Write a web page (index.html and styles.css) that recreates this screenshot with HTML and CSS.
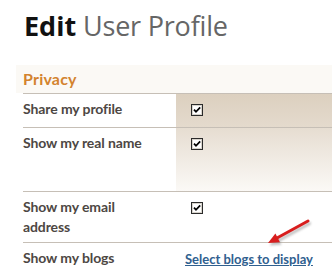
FILE: index.html
```html
<!DOCTYPE html>
<html>
<head>
<meta charset="utf-8">
<link rel="stylesheet" href="styles.css">
</head>
<body>
<div class="page">
  <h1 class="title"><span class="title-strong">Edit</span> User Profile</h1>
  <div class="section-band"><h2 class="section-title">Privacy</h2></div>
  <div class="rows">
    <div class="row row--share">
      <div class="label">Share my profile</div>
      <div class="value value--shade-a">
        <svg class="check" width="12" height="12" viewBox="0 0 12 12"><rect x="0.5" y="0.5" width="11" height="11" fill="#fff" stroke="#2b2b2b"/><rect x="1.5" y="1.5" width="9" height="9" fill="none" stroke="#d8d4cc"/><path d="M3 5.6 L5 7.8 L9.2 3.4" fill="none" stroke="#000" stroke-width="1.8"/></svg>
      </div>
    </div>
    <div class="row row--name">
      <div class="label">Show my real name</div>
      <div class="value value--shade-b">
        <svg class="check" width="12" height="12" viewBox="0 0 12 12"><rect x="0.5" y="0.5" width="11" height="11" fill="#fff" stroke="#2b2b2b"/><rect x="1.5" y="1.5" width="9" height="9" fill="none" stroke="#d8d4cc"/><path d="M3 5.6 L5 7.8 L9.2 3.4" fill="none" stroke="#000" stroke-width="1.8"/></svg>
      </div>
    </div>
    <div class="row row--email">
      <div class="label">Show my email<br>address</div>
      <div class="value">
        <svg class="check" width="12" height="12" viewBox="0 0 12 12"><rect x="0.5" y="0.5" width="11" height="11" fill="#fff" stroke="#2b2b2b"/><rect x="1.5" y="1.5" width="9" height="9" fill="none" stroke="#d8d4cc"/><path d="M3 5.6 L5 7.8 L9.2 3.4" fill="none" stroke="#000" stroke-width="1.8"/></svg>
      </div>
    </div>
    <div class="row row--blogs">
      <div class="label">Show my blogs</div>
      <div class="value value--link"><a class="link" href="#">Select blogs to display</a></div>
    </div>
  </div>
  <svg class="arrow" width="60" height="42" viewBox="0 0 60 42">
    <defs>
      <filter id="blur" x="-20%" y="-20%" width="140%" height="140%"><feGaussianBlur stdDeviation="1.2"/></filter>
    </defs>
    <g transform="translate(1.5,2.5)" fill="#777" stroke="#777" opacity="0.45" filter="url(#blur)">
      <path d="M48 9 L17 26" stroke-width="3" stroke-linecap="round"/>
      <path d="M8 31 L20 30.3 L15.4 21.5 Z" stroke="none"/>
    </g>
    <g fill="#d81e1e" stroke="#d81e1e">
      <path d="M48 9 L17 26" stroke-width="3" stroke-linecap="round"/>
      <path d="M8 31 L20 30.3 L15.4 21.5 Z" stroke="none"/>
    </g>
  </svg>
</div>
</body>
</html>
```

FILE: styles.css
```css
html, body {
  margin: 0;
  padding: 0;
  background: #ffffff;
}

.page {
  position: relative;
  width: 332px;
  height: 274px;
  overflow: hidden;
  font-family: Lato, "Open Sans", sans-serif;
}

.title {
  margin: 0;
  padding: 7px 0 0 24px;
  font-family: "Open Sans", sans-serif;
  font-size: 27px;
  font-weight: 400;
  color: #666666;
  line-height: normal;
  letter-spacing: -0.2px;
}

.title-strong {
  font-weight: 700;
  color: #111111;
  letter-spacing: 0;
}

.section-band {
  margin: 21px 0 0 16px;
  padding: 4px 0 4px 7px;
  background: #fbf9f5;
}

.section-title {
  margin: 0;
  font-size: 16px;
  line-height: 20px;
  font-weight: 700;
  color: #d3832e;
  letter-spacing: 0.2px;
}

.rows {
  margin-left: 23px;
}

.row {
  display: grid;
  grid-template-columns: 153px 1fr;
  border-top: 1px solid #c6bfb6;
}

.row--share { height: 33px; }
.row--name { height: 63px; }
.row--email { height: 50px; }
.row--blogs { height: 40px; }

.label {
  padding-top: 5px;
  font-size: 14px;
  line-height: 20px;
  font-weight: 700;
  color: #4d4743;
  letter-spacing: -0.1px;
}

.value {
  padding: 10px 0 0 15px;
}

.value--shade-a {
  background: linear-gradient(to bottom, #dcd0bf, #e4dacd);
}

.value--shade-b {
  background: linear-gradient(to bottom, #e6ddd1, #fbf9f6);
}

.value--link {
  padding: 5px 0 0 9px;
}

.check {
  display: block;
}

.link {
  font-size: 13px;
  line-height: 20px;
  font-weight: 700;
  color: #30608f;
  text-decoration: underline;
}

.arrow {
  position: absolute;
  left: 260px;
  top: 212px;
}
```
